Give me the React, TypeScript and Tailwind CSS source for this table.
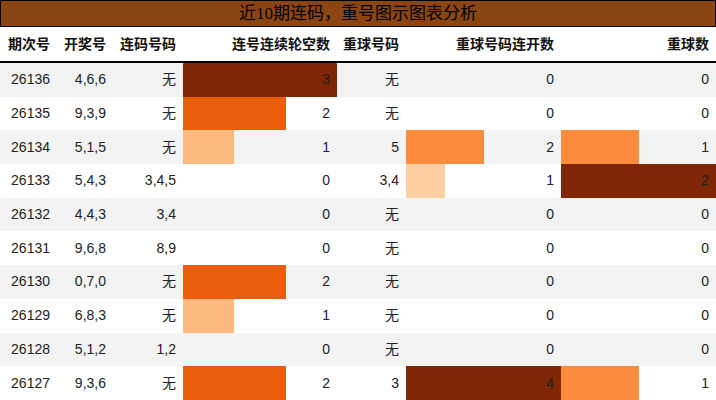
const TITLE = "近10期连码，重号图示图表分析";

type Row = {
  issue: string;
  draw: string;
  linkNums: string;
  linkMiss: number;
  repeatNums: string;
  repeatRun: number;
  repeatCount: number;
};

const rows: Row[] = [
  { issue: "26136", draw: "4,6,6", linkNums: "无", linkMiss: 3, repeatNums: "无", repeatRun: 0, repeatCount: 0 },
  { issue: "26135", draw: "9,3,9", linkNums: "无", linkMiss: 2, repeatNums: "无", repeatRun: 0, repeatCount: 0 },
  { issue: "26134", draw: "5,1,5", linkNums: "无", linkMiss: 1, repeatNums: "5", repeatRun: 2, repeatCount: 1 },
  { issue: "26133", draw: "5,4,3", linkNums: "3,4,5", linkMiss: 0, repeatNums: "3,4", repeatRun: 1, repeatCount: 2 },
  { issue: "26132", draw: "4,4,3", linkNums: "3,4", linkMiss: 0, repeatNums: "无", repeatRun: 0, repeatCount: 0 },
  { issue: "26131", draw: "9,6,8", linkNums: "8,9", linkMiss: 0, repeatNums: "无", repeatRun: 0, repeatCount: 0 },
  { issue: "26130", draw: "0,7,0", linkNums: "无", linkMiss: 2, repeatNums: "无", repeatRun: 0, repeatCount: 0 },
  { issue: "26129", draw: "6,8,3", linkNums: "无", linkMiss: 1, repeatNums: "无", repeatRun: 0, repeatCount: 0 },
  { issue: "26128", draw: "5,1,2", linkNums: "1,2", linkMiss: 0, repeatNums: "无", repeatRun: 0, repeatCount: 0 },
  { issue: "26127", draw: "9,3,6", linkNums: "无", linkMiss: 2, repeatNums: "3", repeatRun: 4, repeatCount: 1 },
];

const headers = ["期次号", "开奖号", "连码号码", "连号连续轮空数", "重球号码", "重球号码连开数", "重球数"];

// oranges scale, picked by ratio value/max
const barColor = (ratio: number) => {
  if (ratio >= 1) return "#7f2704";
  if (ratio >= 0.66) return "#e95e0d";
  if (ratio >= 0.5) return "#fd8d3c";
  if (ratio >= 0.33) return "#fdb97e";
  return "#fdd0a2";
};

const maxOf = (key: "linkMiss" | "repeatRun" | "repeatCount") =>
  Math.max(...rows.map((r) => r[key]));

function BarCell({ value, max }: { value: number; max: number }) {
  const ratio = max ? value / max : 0;
  return (
    <div className="relative flex items-center justify-end pr-[7px]">
      {value > 0 ? (
        <div
          className="absolute inset-y-0 left-0"
          style={{ width: `${ratio * 100}%`, backgroundColor: barColor(ratio) }}
        />
      ) : null}
      <span className="relative">{value}</span>
    </div>
  );
}

function TextCell({ children }: { children: React.ReactNode }) {
  return <div className="flex items-center justify-end pr-[7px]">{children}</div>;
}

const GRID = "grid grid-cols-[57px_56px_70px_154px_69px_155px_155px]";

export default function App() {
  const maxMiss = maxOf("linkMiss");
  const maxRun = maxOf("repeatRun");
  const maxCount = maxOf("repeatCount");

  return (
    <div className="h-[400px] w-[716px] overflow-hidden bg-white text-[14px] text-[#222] [font-family:'Liberation_Sans','Noto_Sans_CJK_SC',sans-serif]">
      <div className="flex h-[27px] items-center justify-center border border-black bg-[#8b4513] text-[17px] text-black [font-family:'Liberation_Serif','Noto_Sans_CJK_SC',serif]">
        {TITLE}
      </div>

      <div className={`${GRID} h-[36px] border-b-2 border-black font-bold text-[#111]`}>
        {headers.map((h) => (
          <div key={h} className="flex items-center justify-end pr-[7px]">
            {h}
          </div>
        ))}
      </div>

      <div className="flex flex-col">
        {rows.map((r, i) => (
          <div
            key={r.issue}
            className={`${GRID} h-[33.7px] ${i % 2 === 0 ? "bg-[#f3f3f3]" : "bg-white"}`}
          >
            <TextCell>{r.issue}</TextCell>
            <TextCell>{r.draw}</TextCell>
            <TextCell>{r.linkNums}</TextCell>
            <BarCell value={r.linkMiss} max={maxMiss} />
            <TextCell>{r.repeatNums}</TextCell>
            <BarCell value={r.repeatRun} max={maxRun} />
            <BarCell value={r.repeatCount} max={maxCount} />
          </div>
        ))}
      </div>
    </div>
  );
}
